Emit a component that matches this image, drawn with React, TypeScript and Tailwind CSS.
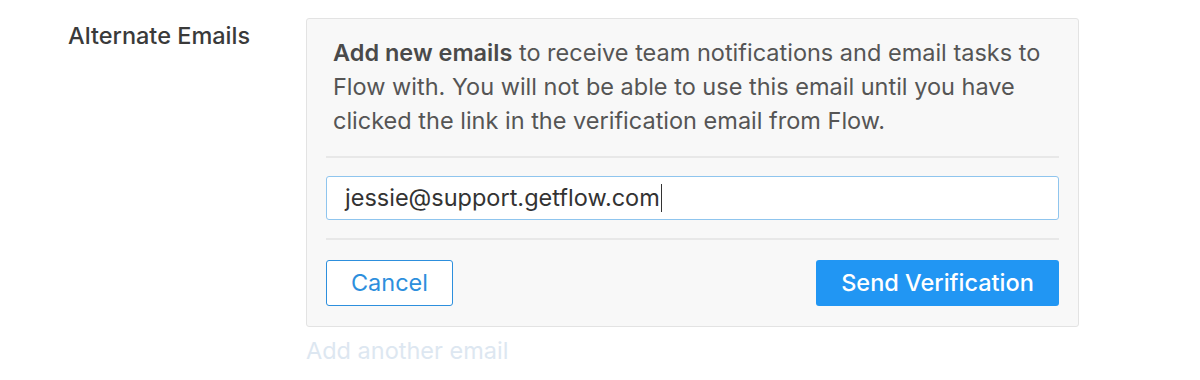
import React from 'react';

const App: React.FC = () => {
    return (
        <div className="w-[1200px] h-[380px] bg-white font-['Inter',sans-serif] flex pt-[18px]">
            {/* Label column */}
            <div className="w-[306px] pl-[68px] pt-[3px]">
                <h3 className="text-[23.5px] leading-[30px] text-[#3a3a3a] font-medium">Alternate Emails</h3>
            </div>

            {/* Form column */}
            <div className="w-[773px] flex flex-col">
                <div className="bg-[#f8f8f8] border border-[#e3e3e3] rounded-[3px] px-[19px] pt-[17px] pb-[20px]">
                    <p className="px-[7px] text-[23.5px] leading-[34px] text-[#555555] pb-[18px]">
                        <span className="font-semibold text-[#4a4a4a]">Add new emails</span> to receive team notifications and email tasks to Flow with. You will not be able to use this email until you have clicked the link in the verification email from Flow.
                    </p>
                    <div className="h-[2px] bg-[#e8e8e8]" />
                    <div className="py-[18px]">
                        <div className="h-[44px] bg-white border border-[#8fc5ee] rounded-[3px] flex items-center pl-[18px]">
                            <span className="text-[23.5px] text-[#333333]">jessie@support.getflow.com</span>
                            <span className="w-[1.5px] h-[28px] bg-[#333333] ml-[1px]" />
                        </div>
                    </div>
                    <div className="h-[2px] bg-[#e8e8e8]" />
                    <div className="flex justify-between pt-[20px]">
                        <button className="w-[127px] h-[46px] border-[1.5px] border-[#2d8fdd] rounded-[3px] text-[23.5px] text-[#2d8fdd] bg-white">
                            Cancel
                        </button>
                        <button className="w-[243px] h-[46px] rounded-[3px] bg-[#2196f3] text-white text-[23.5px] font-medium">
                            Send Verification
                        </button>
                    </div>
                </div>
                <a className="text-[23.5px] leading-[30px] text-[#dde7f1] mt-[9px]">Add another email</a>
            </div>
        </div>
    );
};

export default App;
